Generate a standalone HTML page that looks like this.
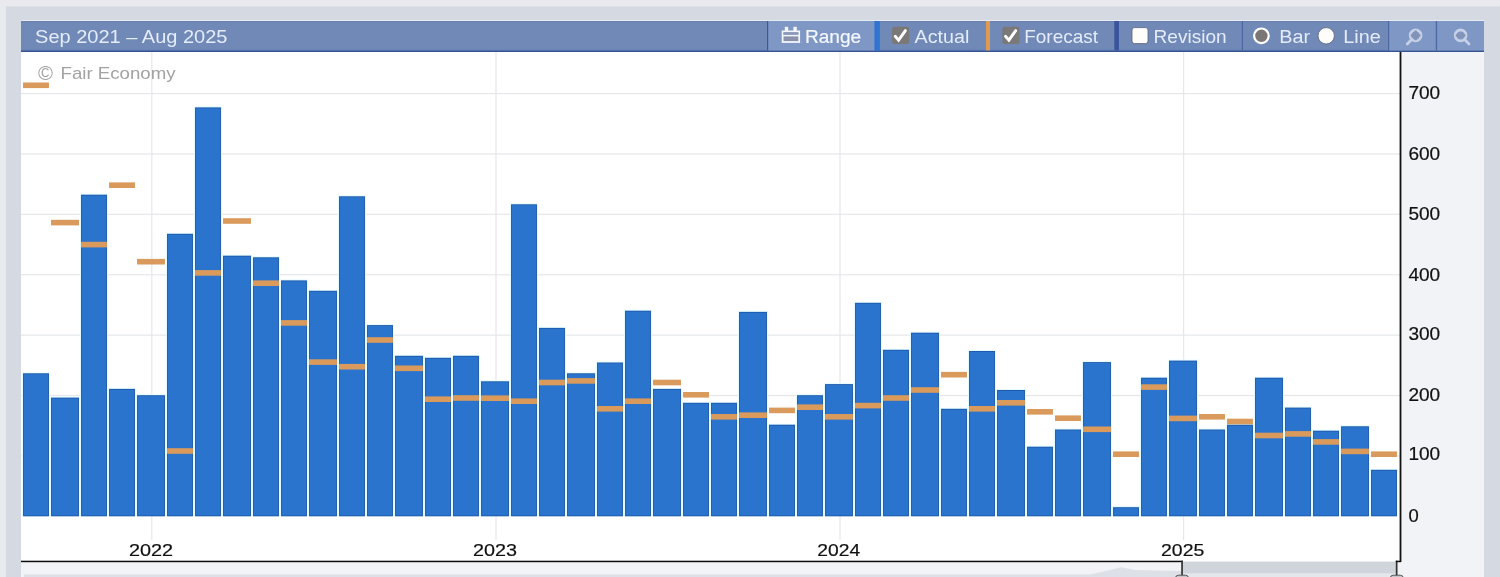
<!DOCTYPE html>
<html><head><meta charset="utf-8"><title>Chart</title>
<style>html,body{margin:0;padding:0;width:1500px;height:577px;overflow:hidden;background:#e9eaee;font-family:"Liberation Sans", sans-serif;}</style>
</head><body><svg width="1500" height="577" viewBox="0 0 1500 577" style="display:block;will-change:transform;font-family:'Liberation Sans', sans-serif"><rect x="0" y="0" width="1500" height="577" fill="#e9eaee"/><rect x="6" y="6.5" width="1494" height="571" fill="#d4d9e2"/><rect x="1400" y="52" width="84" height="525" fill="#f1f3f6"/><rect x="21" y="52" width="1379" height="509.5" fill="#ffffff"/><rect x="21" y="455.31" width="1379" height="1.2" fill="#e6e7ea"/><rect x="21" y="394.92" width="1379" height="1.2" fill="#e6e7ea"/><rect x="21" y="334.53" width="1379" height="1.2" fill="#e6e7ea"/><rect x="21" y="274.14" width="1379" height="1.2" fill="#e6e7ea"/><rect x="21" y="213.75" width="1379" height="1.2" fill="#e6e7ea"/><rect x="21" y="153.36" width="1379" height="1.2" fill="#e6e7ea"/><rect x="21" y="92.97" width="1379" height="1.2" fill="#e6e7ea"/><rect x="151.20" y="52" width="1.2" height="488" fill="#e6e7ea"/><rect x="495.40" y="52" width="1.2" height="488" fill="#e6e7ea"/><rect x="839.40" y="52" width="1.2" height="488" fill="#e6e7ea"/><rect x="1183.00" y="52" width="1.2" height="488" fill="#e6e7ea"/><rect x="22.05" y="372.30" width="27.90" height="144.00" fill="#e4faff"/><rect x="50.05" y="396.60" width="29.90" height="119.70" fill="#e4faff"/><rect x="80.05" y="193.70" width="27.90" height="322.60" fill="#e4faff"/><rect x="108.05" y="387.90" width="27.90" height="128.40" fill="#e4faff"/><rect x="136.05" y="394.20" width="29.90" height="122.10" fill="#e4faff"/><rect x="166.05" y="232.80" width="27.90" height="283.50" fill="#e4faff"/><rect x="194.05" y="106.40" width="27.90" height="409.90" fill="#e4faff"/><rect x="222.05" y="254.70" width="29.90" height="261.60" fill="#e4faff"/><rect x="252.05" y="256.30" width="27.90" height="260.00" fill="#e4faff"/><rect x="280.05" y="279.40" width="27.90" height="236.90" fill="#e4faff"/><rect x="308.05" y="289.80" width="29.90" height="226.50" fill="#e4faff"/><rect x="338.05" y="195.30" width="27.90" height="321.00" fill="#e4faff"/><rect x="366.05" y="324.10" width="27.90" height="192.20" fill="#e4faff"/><rect x="394.05" y="354.80" width="29.90" height="161.50" fill="#e4faff"/><rect x="424.05" y="356.80" width="27.90" height="159.50" fill="#e4faff"/><rect x="452.05" y="354.80" width="27.90" height="161.50" fill="#e4faff"/><rect x="480.05" y="380.30" width="29.90" height="136.00" fill="#e4faff"/><rect x="510.05" y="203.30" width="27.90" height="313.00" fill="#e4faff"/><rect x="538.05" y="326.90" width="27.90" height="189.40" fill="#e4faff"/><rect x="566.05" y="372.30" width="29.90" height="144.00" fill="#e4faff"/><rect x="596.05" y="361.50" width="27.90" height="154.80" fill="#e4faff"/><rect x="624.05" y="309.70" width="27.90" height="206.60" fill="#e4faff"/><rect x="652.05" y="387.90" width="29.90" height="128.40" fill="#e4faff"/><rect x="682.05" y="401.80" width="27.90" height="114.50" fill="#e4faff"/><rect x="710.05" y="401.80" width="27.90" height="114.50" fill="#e4faff"/><rect x="738.05" y="310.90" width="29.90" height="205.40" fill="#e4faff"/><rect x="768.05" y="423.70" width="27.90" height="92.60" fill="#e4faff"/><rect x="796.05" y="394.20" width="27.90" height="122.10" fill="#e4faff"/><rect x="824.05" y="383.10" width="29.90" height="133.20" fill="#e4faff"/><rect x="854.05" y="301.80" width="27.90" height="214.50" fill="#e4faff"/><rect x="882.05" y="348.80" width="27.90" height="167.50" fill="#e4faff"/><rect x="910.05" y="331.70" width="29.90" height="184.60" fill="#e4faff"/><rect x="940.05" y="407.80" width="27.90" height="108.50" fill="#e4faff"/><rect x="968.05" y="350.00" width="27.90" height="166.30" fill="#e4faff"/><rect x="996.05" y="389.00" width="29.90" height="127.30" fill="#e4faff"/><rect x="1026.05" y="445.70" width="27.90" height="70.60" fill="#e4faff"/><rect x="1054.05" y="428.50" width="27.90" height="87.80" fill="#e4faff"/><rect x="1082.05" y="361.10" width="29.90" height="155.20" fill="#e4faff"/><rect x="1112.05" y="506.20" width="27.90" height="10.10" fill="#e4faff"/><rect x="1140.05" y="376.70" width="27.90" height="139.60" fill="#e4faff"/><rect x="1168.05" y="359.60" width="29.90" height="156.70" fill="#e4faff"/><rect x="1198.05" y="428.50" width="27.90" height="87.80" fill="#e4faff"/><rect x="1226.05" y="423.70" width="27.90" height="92.60" fill="#e4faff"/><rect x="1254.05" y="376.70" width="29.90" height="139.60" fill="#e4faff"/><rect x="1284.05" y="406.60" width="27.90" height="109.70" fill="#e4faff"/><rect x="1312.05" y="429.70" width="27.90" height="86.60" fill="#e4faff"/><rect x="1340.05" y="425.30" width="29.90" height="91.00" fill="#e4faff"/><rect x="1370.05" y="468.80" width="27.90" height="47.50" fill="#e4faff"/><rect x="23.05" y="373.30" width="25.90" height="143.00" fill="#1c59ab"/><rect x="23.95" y="374.20" width="24.10" height="141.20" fill="#2b74cd"/><rect x="51.05" y="397.60" width="27.90" height="118.70" fill="#1c59ab"/><rect x="51.95" y="398.50" width="26.10" height="116.90" fill="#2b74cd"/><rect x="81.05" y="194.70" width="25.90" height="321.60" fill="#1c59ab"/><rect x="81.95" y="195.60" width="24.10" height="319.80" fill="#2b74cd"/><rect x="109.05" y="388.90" width="25.90" height="127.40" fill="#1c59ab"/><rect x="109.95" y="389.80" width="24.10" height="125.60" fill="#2b74cd"/><rect x="137.05" y="395.20" width="27.90" height="121.10" fill="#1c59ab"/><rect x="137.95" y="396.10" width="26.10" height="119.30" fill="#2b74cd"/><rect x="167.05" y="233.80" width="25.90" height="282.50" fill="#1c59ab"/><rect x="167.95" y="234.70" width="24.10" height="280.70" fill="#2b74cd"/><rect x="195.05" y="107.40" width="25.90" height="408.90" fill="#1c59ab"/><rect x="195.95" y="108.30" width="24.10" height="407.10" fill="#2b74cd"/><rect x="223.05" y="255.70" width="27.90" height="260.60" fill="#1c59ab"/><rect x="223.95" y="256.60" width="26.10" height="258.80" fill="#2b74cd"/><rect x="253.05" y="257.30" width="25.90" height="259.00" fill="#1c59ab"/><rect x="253.95" y="258.20" width="24.10" height="257.20" fill="#2b74cd"/><rect x="281.05" y="280.40" width="25.90" height="235.90" fill="#1c59ab"/><rect x="281.95" y="281.30" width="24.10" height="234.10" fill="#2b74cd"/><rect x="309.05" y="290.80" width="27.90" height="225.50" fill="#1c59ab"/><rect x="309.95" y="291.70" width="26.10" height="223.70" fill="#2b74cd"/><rect x="339.05" y="196.30" width="25.90" height="320.00" fill="#1c59ab"/><rect x="339.95" y="197.20" width="24.10" height="318.20" fill="#2b74cd"/><rect x="367.05" y="325.10" width="25.90" height="191.20" fill="#1c59ab"/><rect x="367.95" y="326.00" width="24.10" height="189.40" fill="#2b74cd"/><rect x="395.05" y="355.80" width="27.90" height="160.50" fill="#1c59ab"/><rect x="395.95" y="356.70" width="26.10" height="158.70" fill="#2b74cd"/><rect x="425.05" y="357.80" width="25.90" height="158.50" fill="#1c59ab"/><rect x="425.95" y="358.70" width="24.10" height="156.70" fill="#2b74cd"/><rect x="453.05" y="355.80" width="25.90" height="160.50" fill="#1c59ab"/><rect x="453.95" y="356.70" width="24.10" height="158.70" fill="#2b74cd"/><rect x="481.05" y="381.30" width="27.90" height="135.00" fill="#1c59ab"/><rect x="481.95" y="382.20" width="26.10" height="133.20" fill="#2b74cd"/><rect x="511.05" y="204.30" width="25.90" height="312.00" fill="#1c59ab"/><rect x="511.95" y="205.20" width="24.10" height="310.20" fill="#2b74cd"/><rect x="539.05" y="327.90" width="25.90" height="188.40" fill="#1c59ab"/><rect x="539.95" y="328.80" width="24.10" height="186.60" fill="#2b74cd"/><rect x="567.05" y="373.30" width="27.90" height="143.00" fill="#1c59ab"/><rect x="567.95" y="374.20" width="26.10" height="141.20" fill="#2b74cd"/><rect x="597.05" y="362.50" width="25.90" height="153.80" fill="#1c59ab"/><rect x="597.95" y="363.40" width="24.10" height="152.00" fill="#2b74cd"/><rect x="625.05" y="310.70" width="25.90" height="205.60" fill="#1c59ab"/><rect x="625.95" y="311.60" width="24.10" height="203.80" fill="#2b74cd"/><rect x="653.05" y="388.90" width="27.90" height="127.40" fill="#1c59ab"/><rect x="653.95" y="389.80" width="26.10" height="125.60" fill="#2b74cd"/><rect x="683.05" y="402.80" width="25.90" height="113.50" fill="#1c59ab"/><rect x="683.95" y="403.70" width="24.10" height="111.70" fill="#2b74cd"/><rect x="711.05" y="402.80" width="25.90" height="113.50" fill="#1c59ab"/><rect x="711.95" y="403.70" width="24.10" height="111.70" fill="#2b74cd"/><rect x="739.05" y="311.90" width="27.90" height="204.40" fill="#1c59ab"/><rect x="739.95" y="312.80" width="26.10" height="202.60" fill="#2b74cd"/><rect x="769.05" y="424.70" width="25.90" height="91.60" fill="#1c59ab"/><rect x="769.95" y="425.60" width="24.10" height="89.80" fill="#2b74cd"/><rect x="797.05" y="395.20" width="25.90" height="121.10" fill="#1c59ab"/><rect x="797.95" y="396.10" width="24.10" height="119.30" fill="#2b74cd"/><rect x="825.05" y="384.10" width="27.90" height="132.20" fill="#1c59ab"/><rect x="825.95" y="385.00" width="26.10" height="130.40" fill="#2b74cd"/><rect x="855.05" y="302.80" width="25.90" height="213.50" fill="#1c59ab"/><rect x="855.95" y="303.70" width="24.10" height="211.70" fill="#2b74cd"/><rect x="883.05" y="349.80" width="25.90" height="166.50" fill="#1c59ab"/><rect x="883.95" y="350.70" width="24.10" height="164.70" fill="#2b74cd"/><rect x="911.05" y="332.70" width="27.90" height="183.60" fill="#1c59ab"/><rect x="911.95" y="333.60" width="26.10" height="181.80" fill="#2b74cd"/><rect x="941.05" y="408.80" width="25.90" height="107.50" fill="#1c59ab"/><rect x="941.95" y="409.70" width="24.10" height="105.70" fill="#2b74cd"/><rect x="969.05" y="351.00" width="25.90" height="165.30" fill="#1c59ab"/><rect x="969.95" y="351.90" width="24.10" height="163.50" fill="#2b74cd"/><rect x="997.05" y="390.00" width="27.90" height="126.30" fill="#1c59ab"/><rect x="997.95" y="390.90" width="26.10" height="124.50" fill="#2b74cd"/><rect x="1027.05" y="446.70" width="25.90" height="69.60" fill="#1c59ab"/><rect x="1027.95" y="447.60" width="24.10" height="67.80" fill="#2b74cd"/><rect x="1055.05" y="429.50" width="25.90" height="86.80" fill="#1c59ab"/><rect x="1055.95" y="430.40" width="24.10" height="85.00" fill="#2b74cd"/><rect x="1083.05" y="362.10" width="27.90" height="154.20" fill="#1c59ab"/><rect x="1083.95" y="363.00" width="26.10" height="152.40" fill="#2b74cd"/><rect x="1113.05" y="507.20" width="25.90" height="9.10" fill="#1c59ab"/><rect x="1113.95" y="508.10" width="24.10" height="7.30" fill="#2b74cd"/><rect x="1141.05" y="377.70" width="25.90" height="138.60" fill="#1c59ab"/><rect x="1141.95" y="378.60" width="24.10" height="136.80" fill="#2b74cd"/><rect x="1169.05" y="360.60" width="27.90" height="155.70" fill="#1c59ab"/><rect x="1169.95" y="361.50" width="26.10" height="153.90" fill="#2b74cd"/><rect x="1199.05" y="429.50" width="25.90" height="86.80" fill="#1c59ab"/><rect x="1199.95" y="430.40" width="24.10" height="85.00" fill="#2b74cd"/><rect x="1227.05" y="424.70" width="25.90" height="91.60" fill="#1c59ab"/><rect x="1227.95" y="425.60" width="24.10" height="89.80" fill="#2b74cd"/><rect x="1255.05" y="377.70" width="27.90" height="138.60" fill="#1c59ab"/><rect x="1255.95" y="378.60" width="26.10" height="136.80" fill="#2b74cd"/><rect x="1285.05" y="407.60" width="25.90" height="108.70" fill="#1c59ab"/><rect x="1285.95" y="408.50" width="24.10" height="106.90" fill="#2b74cd"/><rect x="1313.05" y="430.70" width="25.90" height="85.60" fill="#1c59ab"/><rect x="1313.95" y="431.60" width="24.10" height="83.80" fill="#2b74cd"/><rect x="1341.05" y="426.30" width="27.90" height="90.00" fill="#1c59ab"/><rect x="1341.95" y="427.20" width="26.10" height="88.20" fill="#2b74cd"/><rect x="1371.05" y="469.80" width="25.90" height="46.50" fill="#1c59ab"/><rect x="1371.95" y="470.70" width="24.10" height="44.70" fill="#2b74cd"/><rect x="23.05" y="82.50" width="25.90" height="5.6" fill="#d99a5b"/><rect x="51.05" y="219.80" width="27.90" height="5.6" fill="#d99a5b"/><rect x="81.05" y="241.80" width="25.90" height="5.6" fill="#d99a5b"/><rect x="109.05" y="182.40" width="25.90" height="5.6" fill="#d99a5b"/><rect x="137.05" y="258.90" width="27.90" height="5.6" fill="#d99a5b"/><rect x="167.05" y="448.20" width="25.90" height="5.6" fill="#d99a5b"/><rect x="195.05" y="270.10" width="25.90" height="5.6" fill="#d99a5b"/><rect x="223.05" y="218.20" width="27.90" height="5.6" fill="#d99a5b"/><rect x="253.05" y="280.40" width="25.90" height="5.6" fill="#d99a5b"/><rect x="281.05" y="320.10" width="25.90" height="5.6" fill="#d99a5b"/><rect x="309.05" y="359.30" width="27.90" height="5.6" fill="#d99a5b"/><rect x="339.05" y="363.90" width="25.90" height="5.6" fill="#d99a5b"/><rect x="367.05" y="337.20" width="25.90" height="5.6" fill="#d99a5b"/><rect x="395.05" y="365.50" width="27.90" height="5.6" fill="#d99a5b"/><rect x="425.05" y="396.40" width="25.90" height="5.6" fill="#d99a5b"/><rect x="453.05" y="395.20" width="25.90" height="5.6" fill="#d99a5b"/><rect x="481.05" y="395.40" width="27.90" height="5.6" fill="#d99a5b"/><rect x="511.05" y="398.40" width="25.90" height="5.6" fill="#d99a5b"/><rect x="539.05" y="379.70" width="25.90" height="5.6" fill="#d99a5b"/><rect x="567.05" y="378.10" width="27.90" height="5.6" fill="#d99a5b"/><rect x="597.05" y="406.00" width="25.90" height="5.6" fill="#d99a5b"/><rect x="625.05" y="398.40" width="25.90" height="5.6" fill="#d99a5b"/><rect x="653.05" y="379.70" width="27.90" height="5.6" fill="#d99a5b"/><rect x="683.05" y="392.00" width="25.90" height="5.6" fill="#d99a5b"/><rect x="711.05" y="414.00" width="25.90" height="5.6" fill="#d99a5b"/><rect x="739.05" y="412.40" width="27.90" height="5.6" fill="#d99a5b"/><rect x="769.05" y="407.60" width="25.90" height="5.6" fill="#d99a5b"/><rect x="797.05" y="404.40" width="25.90" height="5.6" fill="#d99a5b"/><rect x="825.05" y="414.00" width="27.90" height="5.6" fill="#d99a5b"/><rect x="855.05" y="402.80" width="25.90" height="5.6" fill="#d99a5b"/><rect x="883.05" y="395.20" width="25.90" height="5.6" fill="#d99a5b"/><rect x="911.05" y="387.20" width="27.90" height="5.6" fill="#d99a5b"/><rect x="941.05" y="371.90" width="25.90" height="5.6" fill="#d99a5b"/><rect x="969.05" y="406.00" width="25.90" height="5.6" fill="#d99a5b"/><rect x="997.05" y="400.00" width="27.90" height="5.6" fill="#d99a5b"/><rect x="1027.05" y="409.00" width="25.90" height="5.6" fill="#d99a5b"/><rect x="1055.05" y="415.40" width="25.90" height="5.6" fill="#d99a5b"/><rect x="1083.05" y="426.50" width="27.90" height="5.6" fill="#d99a5b"/><rect x="1113.05" y="451.40" width="25.90" height="5.6" fill="#d99a5b"/><rect x="1141.05" y="384.30" width="25.90" height="5.6" fill="#d99a5b"/><rect x="1169.05" y="415.60" width="27.90" height="5.6" fill="#d99a5b"/><rect x="1199.05" y="414.00" width="25.90" height="5.6" fill="#d99a5b"/><rect x="1227.05" y="418.70" width="25.90" height="5.6" fill="#d99a5b"/><rect x="1255.05" y="432.70" width="27.90" height="5.6" fill="#d99a5b"/><rect x="1285.05" y="431.10" width="25.90" height="5.6" fill="#d99a5b"/><rect x="1313.05" y="439.10" width="25.90" height="5.6" fill="#d99a5b"/><rect x="1341.05" y="448.60" width="27.90" height="5.6" fill="#d99a5b"/><rect x="1371.05" y="451.40" width="25.90" height="5.6" fill="#d99a5b"/><text x="38.0" y="80.2" font-size="19.5" fill="#a2a2a2" text-anchor="start" textLength="15" lengthAdjust="spacingAndGlyphs">©</text><text x="60.5" y="79.2" font-size="17" fill="#a2a2a2" text-anchor="start" textLength="115" lengthAdjust="spacingAndGlyphs">Fair Economy</text><rect x="1399.6" y="52" width="1.8" height="510" fill="#111"/><text x="1408.4" y="460.30" font-size="17.8" fill="#111" stroke="#111" stroke-width="0.2" text-anchor="start" textLength="31.76" lengthAdjust="spacingAndGlyphs">100</text><text x="1408.4" y="401.10" font-size="17.8" fill="#111" stroke="#111" stroke-width="0.2" text-anchor="start" textLength="31.76" lengthAdjust="spacingAndGlyphs">200</text><text x="1408.4" y="340.20" font-size="17.8" fill="#111" stroke="#111" stroke-width="0.2" text-anchor="start" textLength="31.76" lengthAdjust="spacingAndGlyphs">300</text><text x="1408.4" y="280.70" font-size="17.8" fill="#111" stroke="#111" stroke-width="0.2" text-anchor="start" textLength="31.76" lengthAdjust="spacingAndGlyphs">400</text><text x="1408.4" y="220.30" font-size="17.8" fill="#111" stroke="#111" stroke-width="0.2" text-anchor="start" textLength="31.76" lengthAdjust="spacingAndGlyphs">500</text><text x="1408.4" y="160.30" font-size="17.8" fill="#111" stroke="#111" stroke-width="0.2" text-anchor="start" textLength="31.76" lengthAdjust="spacingAndGlyphs">600</text><text x="1408.4" y="99.40" font-size="17.8" fill="#111" stroke="#111" stroke-width="0.2" text-anchor="start" textLength="31.76" lengthAdjust="spacingAndGlyphs">700</text><text x="1408.6" y="521.6" font-size="17.8" fill="#111" stroke="#111" stroke-width="0.2" text-anchor="start" textLength="10.24" lengthAdjust="spacingAndGlyphs">0</text><text x="129.0" y="556" font-size="17" fill="#111" stroke="#111" stroke-width="0.2" text-anchor="start" textLength="44.1" lengthAdjust="spacingAndGlyphs">2022</text><text x="473.0" y="556" font-size="17" fill="#111" stroke="#111" stroke-width="0.2" text-anchor="start" textLength="44.01" lengthAdjust="spacingAndGlyphs">2023</text><text x="817.3" y="556" font-size="17" fill="#111" stroke="#111" stroke-width="0.2" text-anchor="start" textLength="42.81" lengthAdjust="spacingAndGlyphs">2024</text><text x="1161.0" y="556" font-size="17" fill="#111" stroke="#111" stroke-width="0.2" text-anchor="start" textLength="43.27" lengthAdjust="spacingAndGlyphs">2025</text><rect x="21" y="562" width="1379" height="15" fill="#f2f3f6"/><path d="M24 577 L24 574.5 L1090 574.5 L1110 570 L1121 567.3 L1135 570 L1182 571 L1182 577 Z" fill="#dde0e6"/><rect x="1182" y="562" width="215" height="11.6" fill="#d0d4db"/><rect x="1182" y="573.6" width="215" height="3.4" fill="#e4e7ec"/><rect x="21" y="560.7" width="1162" height="1.5" fill="#0a0a0a"/><rect x="1181.2" y="560.7" width="1.7" height="17" fill="#333"/><rect x="1395.8" y="560.7" width="1.7" height="17" fill="#333"/><rect x="1395.8" y="560.7" width="5.2" height="1.5" fill="#111"/><rect x="1175.5" y="575.2" width="13" height="6" rx="3" fill="#c4c6cb" stroke="#555" stroke-width="1"/><rect x="1390.3" y="575.2" width="13" height="6" rx="3" fill="#c4c6cb" stroke="#555" stroke-width="1"/><rect x="21" y="21" width="1463" height="31" fill="#7189b7"/><rect x="21" y="20" width="1463" height="1" fill="#e6ebf3"/><rect x="21" y="21.4" width="1463" height="1" fill="#6a80ab"/><rect x="21" y="49.6" width="1463" height="1" fill="#5f80bd"/><rect x="21" y="50.6" width="1463" height="1.4" fill="#36538f"/><rect x="768" y="21" width="106.5" height="29.4" fill="#7e97c5"/><rect x="767" y="21" width="1.2" height="29.4" fill="#3d5994"/><rect x="1389" y="21" width="47.3" height="29.4" fill="#7e97c5"/><rect x="1437.3" y="21" width="46.7" height="29.4" fill="#7e97c5"/><rect x="1241.8" y="21" width="1.1" height="29.4" fill="#4865a0"/><rect x="1388.1" y="21" width="1.1" height="29.4" fill="#4865a0"/><rect x="1435.8" y="21" width="1.1" height="29.4" fill="#4865a0"/><rect x="874.5" y="21" width="5.3" height="29.4" fill="#2f74d2"/><rect x="986" y="21" width="4" height="29.4" fill="#df9b52"/><rect x="1114.3" y="21" width="4.7" height="29.4" fill="#3a559b"/><text x="35.1" y="43" font-size="18.8" fill="#e4ecfb" text-anchor="start" textLength="192.31" lengthAdjust="spacingAndGlyphs">Sep 2021 – Aug 2025</text><text x="804.9" y="43" font-size="18" fill="#f4f7fd" stroke="#f4f7fd" stroke-width="0.2" text-anchor="start" textLength="56.24" lengthAdjust="spacingAndGlyphs">Range</text><text x="914.6" y="42.8" font-size="18.6" fill="#e4ecfb" text-anchor="start" textLength="54.68" lengthAdjust="spacingAndGlyphs">Actual</text><text x="1024.2" y="42.8" font-size="18.6" fill="#e4ecfb" text-anchor="start" textLength="73.84" lengthAdjust="spacingAndGlyphs">Forecast</text><text x="1153.6" y="42.8" font-size="18.6" fill="#e4ecfb" text-anchor="start" textLength="73.07" lengthAdjust="spacingAndGlyphs">Revision</text><text x="1279.3" y="42.8" font-size="18.6" fill="#e4ecfb" text-anchor="start" textLength="30.85" lengthAdjust="spacingAndGlyphs">Bar</text><text x="1343.3" y="42.8" font-size="18.6" fill="#e4ecfb" text-anchor="start" textLength="37.43" lengthAdjust="spacingAndGlyphs">Line</text><rect x="782.6" y="31.4" width="16.6" height="10.6" fill="#8b91ab" stroke="#f2f5fb" stroke-width="1.8"/><rect x="783.5" y="32.3" width="14.8" height="3" fill="#8a98ba"/><rect x="782.6" y="34.9" width="16.6" height="1.5" fill="#f2f5fb"/><rect x="784.8" y="26.8" width="3.4" height="5" fill="#f2f5fb"/><rect x="793.4" y="26.8" width="3.4" height="5" fill="#f2f5fb"/><rect x="892" y="26.8" width="17.2" height="17.2" rx="2.5" fill="#7b7878"/><path d="M895.2 36.3 L898.6 40.2 L905.4 30.6" fill="none" stroke="#ffffff" stroke-width="2.9" stroke-linecap="round" stroke-linejoin="miter"/><rect x="1002.3" y="26.8" width="17.2" height="17.2" rx="2.5" fill="#7b7878"/><path d="M1005.5 36.3 L1008.9 40.2 L1015.6999999999999 30.6" fill="none" stroke="#ffffff" stroke-width="2.9" stroke-linecap="round" stroke-linejoin="miter"/><rect x="1132" y="27.6" width="16" height="16" rx="2.5" fill="#fffdfb" stroke="#55607a" stroke-width="0.8"/><circle cx="1261.4" cy="35.8" r="7.3" fill="#7b7676" stroke="#ffffff" stroke-width="2.2"/><circle cx="1326.2" cy="35.8" r="8.2" fill="#fffdfb" stroke="#55607a" stroke-width="0.8"/><g fill="none" stroke="#c6d0e6" stroke-width="2.8" stroke-linecap="round"><circle cx="1415.6" cy="35.4" r="5.4"/><path d="M1411.6 39.6 L1407.2 44"/></g><path d="M1410.8 35.4 H1420.4 M1415.6 30.6 V40.2" stroke="#8493b3" stroke-width="2.4" fill="none"/><g fill="none" stroke="#c6d0e6" stroke-width="2.8" stroke-linecap="round"><circle cx="1460.6" cy="35.4" r="5.4"/><path d="M1464.6 39.6 L1469 44"/></g><path d="M1455.8 35.4 H1465.4" stroke="#8493b3" stroke-width="2.4" fill="none"/></svg></body></html>
